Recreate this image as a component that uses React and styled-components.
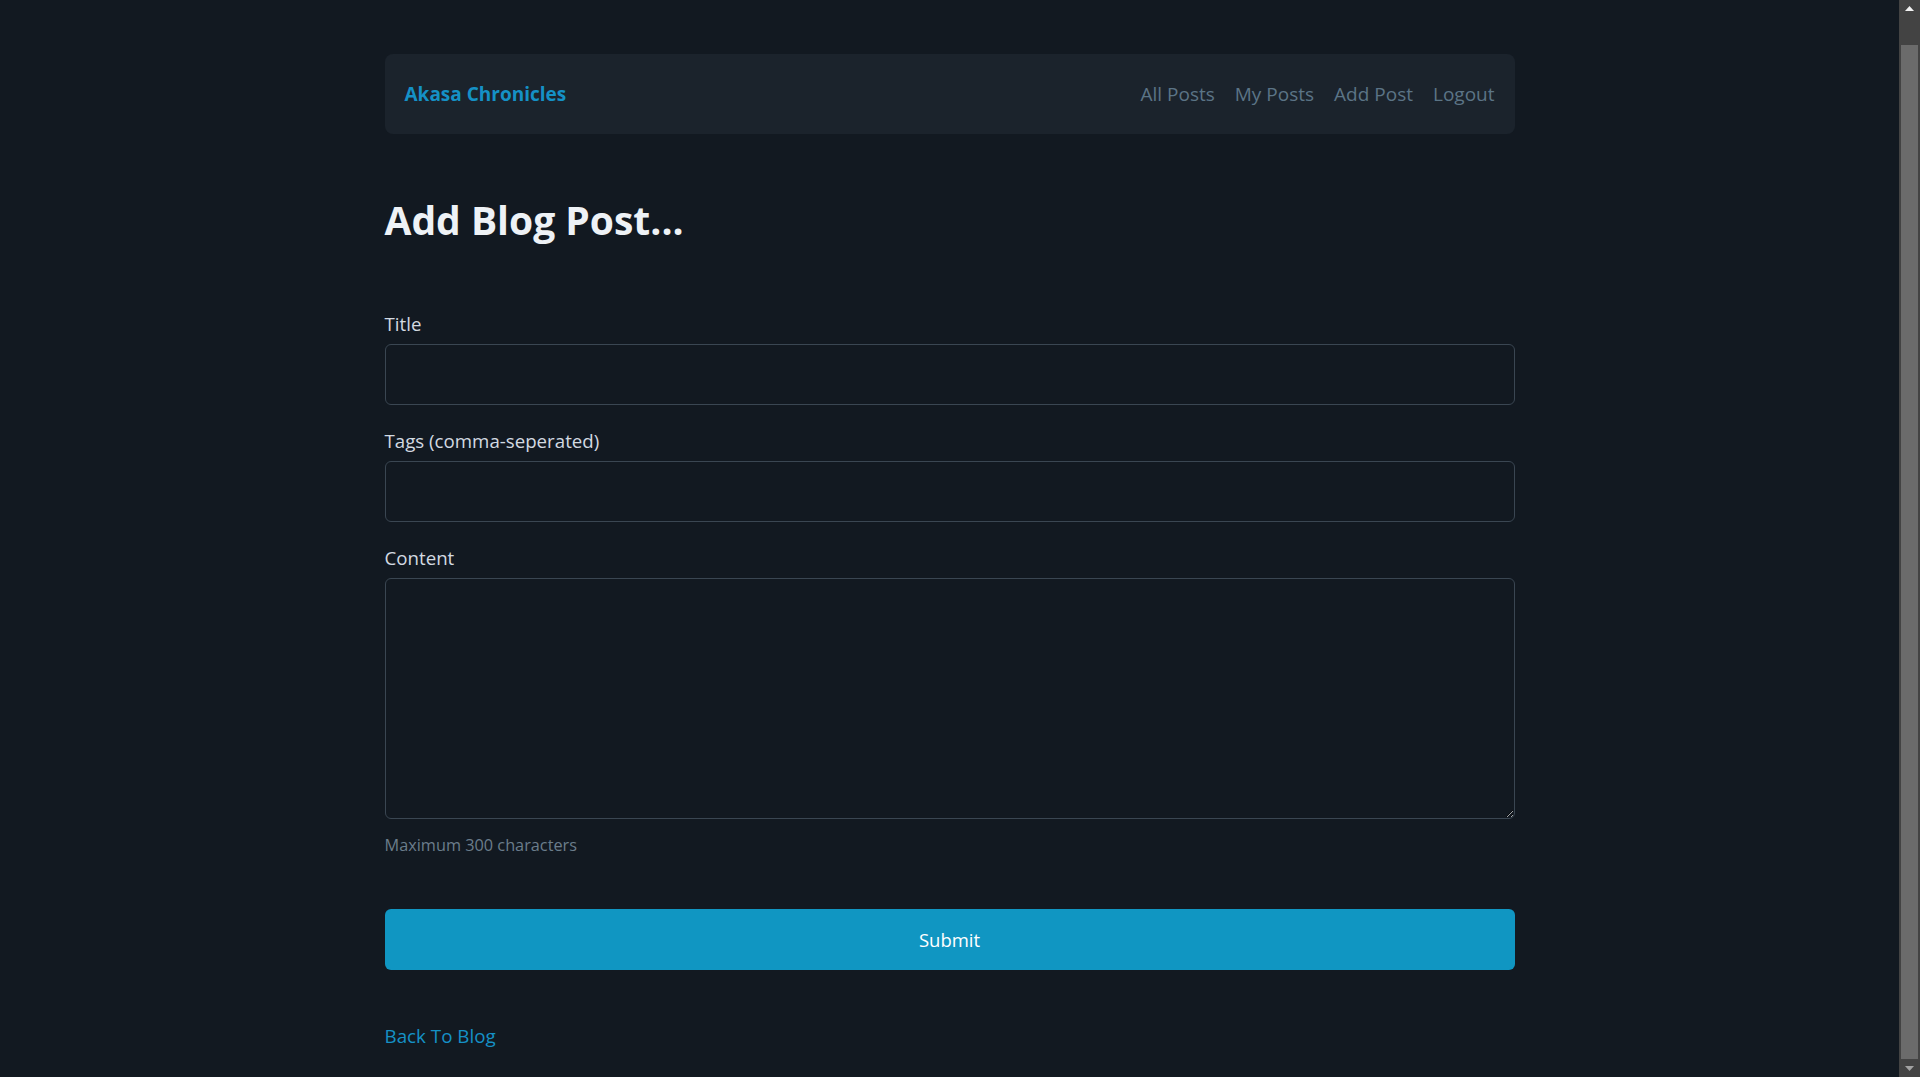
import React from "react";
import styled, { createGlobalStyle } from "styled-components";

const Global = createGlobalStyle`
  html { background: #121921; }
  body {
    margin: 0;
    padding-right: 21px;
    background: #121921;
    font-family: "Open Sans", "Noto Sans", sans-serif;
    color: #d3dae1;
  }
  * { box-sizing: border-box; }
`;

const Page = styled.div`
  width: 1130px;
  margin: 0 auto;
  padding: 54px 0 62px;
`;

const Nav = styled.nav`
  height: 80px;
  padding: 0 20px;
  background: #1b232c;
  border-radius: 8px;
  display: flex;
  align-items: center;
  justify-content: space-between;
`;

const Brand = styled.a`
  color: #1591c6;
  font-weight: 700;
  font-size: 19px;
  text-decoration: none;
`;

const NavLinks = styled.div`
  display: flex;
  gap: 20px;
`;

const NavLink = styled.a`
  color: #5b7486;
  font-size: 19px;
  text-decoration: none;
`;

const Heading = styled.h1`
  margin: 62px 0 68px;
  font-size: 39px;
  line-height: 48px;
  font-weight: 700;
  color: #eef2f6;
`;

const Form = styled.form`
  display: flex;
  flex-direction: column;
`;

const Field = styled.div`
  display: flex;
  flex-direction: column;
  gap: 8px;
  margin-bottom: ${(p) => p.$mb ?? 24}px;
`;

const Label = styled.label`
  font-size: 18.7px;
  line-height: 24px;
  color: #d3dae1;
`;

const Input = styled.input`
  height: 61px;
  background: #121921;
  border: 1px solid #3a4652;
  border-radius: 6px;
  color: #eef2f6;
  font: inherit;
  padding: 0 16px;
  outline: none;
`;

const TextArea = styled.textarea`
  height: 241px;
  background: #121921;
  border: 1px solid #3a4652;
  border-radius: 6px;
  color: #eef2f6;
  font: inherit;
  padding: 12px 16px;
  outline: none;
`;

const Help = styled.div`
  margin-top: 14px;
  font-size: 16.3px;
  line-height: 24px;
  color: #6b7d8b;
`;

const Submit = styled.button`
  margin-top: 52px;
  height: 61px;
  border: none;
  border-radius: 6px;
  background: #1096c2;
  color: #ffffff;
  font-family: inherit;
  font-size: 18.5px;
  cursor: pointer;
`;

const Back = styled.a`
  display: inline-block;
  margin-top: 54px;
  font-size: 18.8px;
  line-height: 24px;
  color: #1591c6;
  text-decoration: none;
`;

const ScrollBar = styled.div`
  position: fixed;
  top: 0;
  right: 0;
  bottom: 0;
  width: 21px;
  background: #434343;
  display: flex;
  flex-direction: column;
  align-items: center;
`;

const Arrow = styled.div`
  flex: none;
  height: 17px;
  width: 100%;
  display: flex;
  align-items: center;
  justify-content: center;
`;

const Thumb = styled.div`
  flex: 1;
  width: 17px;
  margin: 28px 0 1px;
  background: #6b6b6b;
`;

const Triangle = ({ up, color }) => (
  <svg width="9" height="5" viewBox="0 0 9 5">
    <path d={up ? "M0 5 L4.5 0 L9 5 Z" : "M0 0 L4.5 5 L9 0 Z"} fill={color} />
  </svg>
);

export default function App() {
  return (
    <>
      <Global />
      <Page>
        <Nav>
          <Brand href="#">Akasa Chronicles</Brand>
          <NavLinks>
            <NavLink href="#">All Posts</NavLink>
            <NavLink href="#">My Posts</NavLink>
            <NavLink href="#">Add Post</NavLink>
            <NavLink href="#">Logout</NavLink>
          </NavLinks>
        </Nav>
        <Heading>Add Blog Post...</Heading>
        <Form onSubmit={(e) => e.preventDefault()}>
          <Field>
            <Label htmlFor="title">Title</Label>
            <Input id="title" />
          </Field>
          <Field>
            <Label htmlFor="tags">Tags (comma-seperated)</Label>
            <Input id="tags" />
          </Field>
          <Field $mb={0}>
            <Label htmlFor="content">Content</Label>
            <TextArea id="content" />
          </Field>
          <Help>Maximum 300 characters</Help>
          <Submit type="submit">Submit</Submit>
        </Form>
        <Back href="#">Back To Blog</Back>
      </Page>
      <ScrollBar aria-hidden="true">
        <Arrow>
          <Triangle up color="#f2f2f2" />
        </Arrow>
        <Thumb />
        <Arrow>
          <Triangle color="#a3a3a3" />
        </Arrow>
      </ScrollBar>
    </>
  );
}
